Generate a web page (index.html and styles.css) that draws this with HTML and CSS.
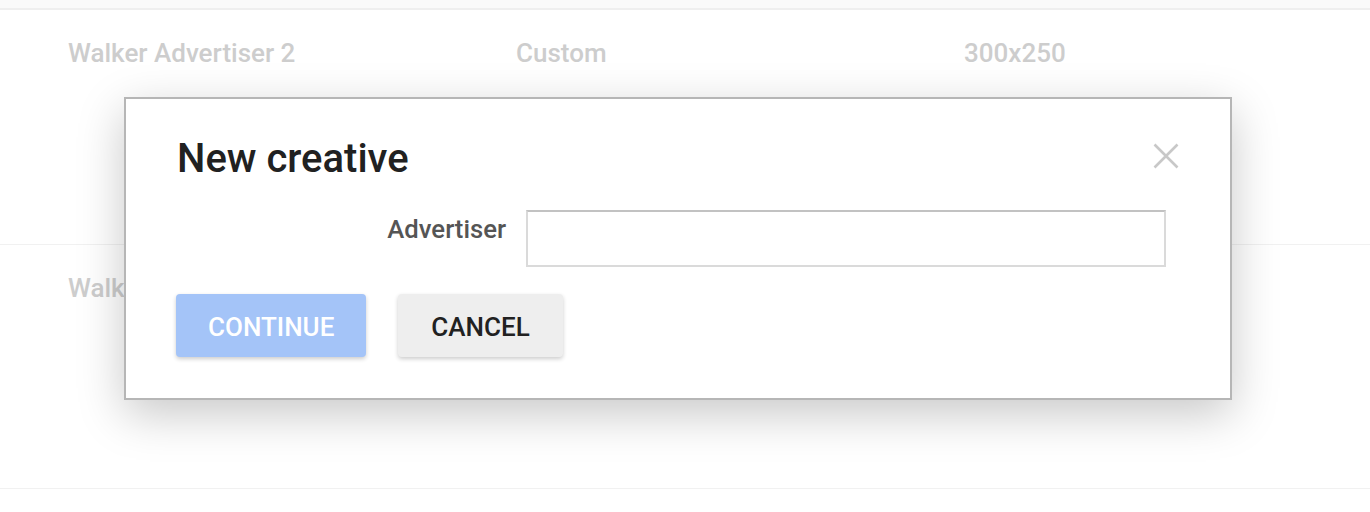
FILE: index.html
```html
<!DOCTYPE html>
<html>
<head>
<meta charset="utf-8">
<link rel="stylesheet" href="styles.css">
</head>
<body>
<div class="page">
  <div class="topbar"></div>
  <div class="row row-first">
    <div class="cell">Walker Advertiser 2</div>
    <div class="cell">Custom</div>
    <div class="cell">300x250</div>
  </div>
  <div class="row">
    <div class="cell">Walker Advertiser 3</div>
    <div class="cell">Custom</div>
    <div class="cell">300x250</div>
  </div>
  <div class="dialog">
    <div class="dialog-head">
      <h1 class="title">New creative</h1>
      <button class="close" aria-label="Close">
        <svg width="26" height="26" viewBox="0 0 26 26"><path d="M1.5 1.5 L24.5 24.5 M24.5 1.5 L1.5 24.5" stroke="#c8c8c8" stroke-width="2.6" fill="none"/></svg>
      </button>
    </div>
    <div class="field">
      <label class="field-label">Advertiser</label>
      <input class="field-input" type="text">
    </div>
    <div class="actions">
      <button class="btn btn-primary">CONTINUE</button>
      <button class="btn btn-secondary">CANCEL</button>
    </div>
  </div>
</div>
</body>
</html>
```

FILE: styles.css
```css
html, body {
  margin: 0;
  padding: 0;
  background: #ffffff;
}
body {
  font-family: Roboto, "Liberation Sans", Arial, sans-serif;
  width: 1370px;
  height: 512px;
  overflow: hidden;
}
.page {
  position: relative;
  height: 512px;
}
.topbar {
  height: 8px;
  background: #fafafa;
  border-bottom: 2px solid #efefef;
}
.row {
  display: grid;
  grid-template-columns: 448px 448px 448px;
  padding: 28px 0 0 68px;
  box-sizing: border-box;
  border-bottom: 1px solid #f1f1f1;
  height: 244px;
}
.row-first {
  height: 235px;
}
.cell {
  font-size: 26px;
  line-height: 30px;
  font-weight: 500;
  color: #cdcdcd;
}
.dialog {
  position: absolute;
  left: 124px;
  top: 97px;
  width: 1108px;
  height: 303px;
  box-sizing: border-box;
  border: 2px solid #b6b6b6;
  background: #fff;
  box-shadow: 0 14px 44px rgba(0, 0, 0, 0.22);
  padding: 38px 64px 0 51px;
  display: flex;
  flex-direction: column;
}
.dialog-head {
  display: flex;
  align-items: center;
  justify-content: space-between;
  height: 44px;
}
.title {
  margin: 0;
  font-size: 40px;
  line-height: 44px;
  font-weight: 500;
  color: #212121;
}
.close {
  border: 0;
  background: none;
  padding: 0;
  margin-right: -13px;
  margin-top: -6px;
  width: 26px;
  height: 26px;
  display: block;
}
.close svg { display: block; }
.field {
  display: flex;
  align-items: flex-start;
  gap: 20px;
  margin-top: 29px;
}
.field-label {
  width: 329px;
  text-align: right;
  font-size: 25.7px;
  line-height: 28px;
  padding-top: 5px;
  font-weight: 500;
  color: #555555;
}
.field-input {
  width: 640px;
  height: 57px;
  box-sizing: border-box;
  margin: 0;
  border: 2px solid #dadada;
  border-top-color: #c2c2c2;
  outline: none;
  background: #fff;
}
.actions {
  display: flex;
  gap: 32px;
  margin-top: 27px;
  margin-left: -1px;
}
.btn {
  height: 63px;
  border: 0;
  border-radius: 4px;
  padding: 0 32px;
  padding-top: 2px;
  font-family: Roboto, "Liberation Sans", Arial, sans-serif;
  font-size: 26px;
  font-weight: 500;
  box-shadow: 0 2px 4px rgba(0, 0, 0, 0.2);
}
.btn-primary {
  background: #a4c4f8;
  color: #ffffff;
}
.btn-secondary {
  background: #eeeeee;
  color: #212121;
  padding-left: 33px;
  padding-right: 33px;
}
```
